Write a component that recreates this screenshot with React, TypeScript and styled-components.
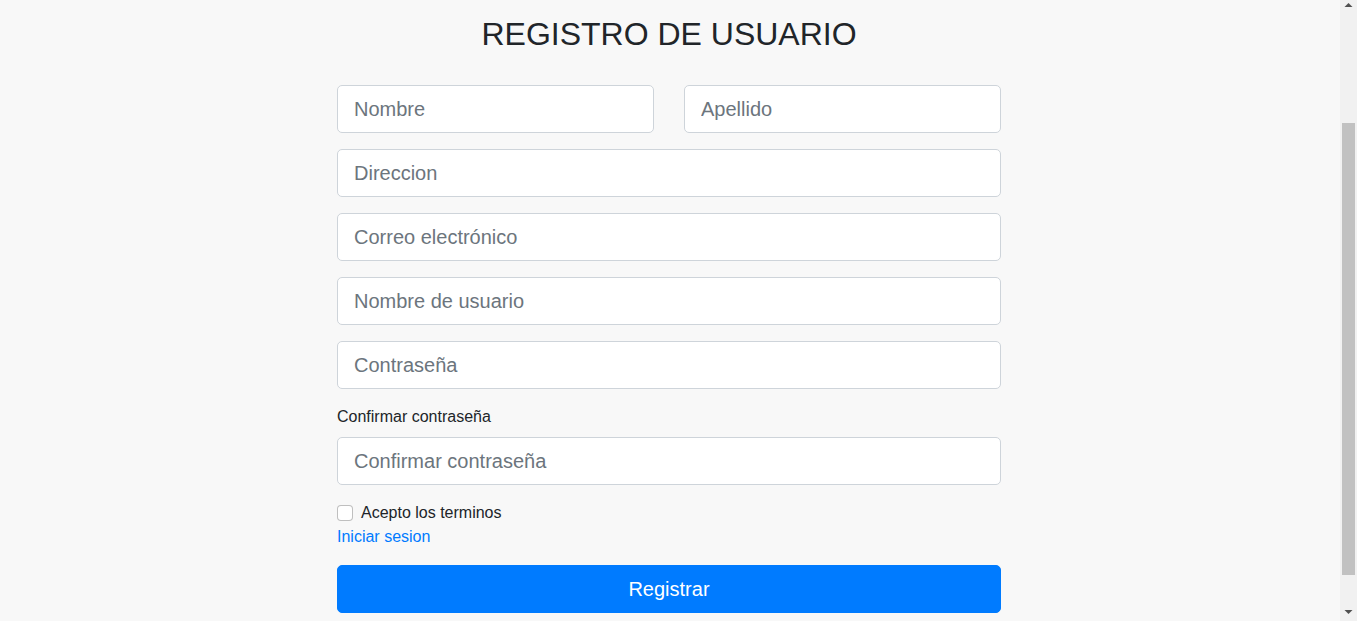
import React from "react";
import styled, { createGlobalStyle } from "styled-components";

const GlobalStyle = createGlobalStyle`
  html, body {
    margin: 0;
    padding: 0;
    background: #f8f8f8;
  }
  body {
    font-family: "Liberation Sans", Arial, sans-serif;
    color: #212529;
    font-size: 16px;
    line-height: 1.5;
  }
  * {
    box-sizing: border-box;
  }
`;

const Page = styled.main`
  padding: 15px 19px 48px 0;
`;

const FormCard = styled.form`
  width: 664px;
  margin: 0 auto;
  display: flex;
  flex-direction: column;
`;

const Title = styled.h2`
  margin: 0 0 32px;
  font-size: 32px;
  line-height: 38px;
  font-weight: 400;
  text-align: center;
  color: #212529;
`;

const TwoCols = styled.div`
  display: grid;
  grid-template-columns: 1fr 1fr;
  column-gap: 30px;
  margin-bottom: 16px;
`;

const Group = styled.div`
  margin-bottom: 16px;
  display: flex;
  flex-direction: column;
`;

const Label = styled.label`
  display: block;
  font-size: 16px;
  line-height: 24px;
  margin-bottom: 8px;
  color: #212529;
`;

const Input = styled.input`
  display: block;
  width: 100%;
  height: 48px;
  padding: 8px 16px;
  font-family: inherit;
  font-size: 20px;
  line-height: 30px;
  color: #495057;
  background: #fff;
  border: 1px solid #ced4da;
  border-radius: 5px;
  outline: none;
  &::placeholder {
    color: #6c757d;
    opacity: 1;
  }
`;

const CheckRow = styled.label`
  display: flex;
  align-items: center;
  gap: 8px;
  font-size: 16px;
  line-height: 24px;
  color: #212529;
`;

const CheckBox = styled.input`
  appearance: none;
  -webkit-appearance: none;
  margin: 0;
  width: 16px;
  height: 16px;
  background: #fff;
  border: 1px solid rgba(0, 0, 0, 0.25);
  border-radius: 4px;
  flex: none;
`;

const LinkText = styled.a`
  display: block;
  align-self: flex-start;
  font-size: 16px;
  line-height: 24px;
  color: #007bff;
  text-decoration: none;
  margin-bottom: 16px;
`;

const SubmitButton = styled.button`
  width: 100%;
  height: 48px;
  border: 1px solid #007bff;
  border-radius: 5px;
  background: #007bff;
  color: #fff;
  font-family: inherit;
  font-size: 20px;
  line-height: 30px;
  cursor: pointer;
`;

/* Window scrollbar drawn over the right edge of the page */
const ScrollBar = styled.div`
  position: fixed;
  top: 0;
  right: 0;
  width: 17px;
  height: 100vh;
  background: #f1f1f1;
  display: flex;
  flex-direction: column;
`;

const ScrollArrow = styled.svg`
  display: block;
  width: 17px;
  height: 17px;
  flex: none;
`;

const ScrollTrack = styled.div`
  flex: 1;
  padding: 106px 2px 0;
`;

const ScrollThumb = styled.div`
  height: 452px;
  background: #c1c1c1;
`;

export default function App() {
  return (
    <>
      <GlobalStyle />
      <Page>
        <FormCard onSubmit={(e) => e.preventDefault()}>
          <Title>REGISTRO DE USUARIO</Title>
          <TwoCols>
            <Input type="text" placeholder="Nombre" />
            <Input type="text" placeholder="Apellido" />
          </TwoCols>
          <Group>
            <Input type="text" placeholder="Direccion" />
          </Group>
          <Group>
            <Input type="email" placeholder="Correo electrónico" />
          </Group>
          <Group>
            <Input type="text" placeholder="Nombre de usuario" />
          </Group>
          <Group>
            <Input type="password" placeholder="Contraseña" />
          </Group>
          <Group>
            <Label htmlFor="confirm">Confirmar contraseña</Label>
            <Input id="confirm" type="password" placeholder="Confirmar contraseña" />
          </Group>
          <CheckRow>
            <CheckBox type="checkbox" />
            Acepto los terminos
          </CheckRow>
          <LinkText href="#">Iniciar sesion</LinkText>
          <SubmitButton type="submit">Registrar</SubmitButton>
        </FormCard>
      </Page>
      <ScrollBar aria-hidden="true">
        <ScrollArrow viewBox="0 0 17 17">
          <polygon points="8.5,3 12.5,7 4.5,7" fill="#505050" />
        </ScrollArrow>
        <ScrollTrack>
          <ScrollThumb />
        </ScrollTrack>
        <ScrollArrow viewBox="0 0 17 17">
          <polygon points="4.5,6 12.5,6 8.5,10" fill="#505050" />
        </ScrollArrow>
      </ScrollBar>
    </>
  );
}
